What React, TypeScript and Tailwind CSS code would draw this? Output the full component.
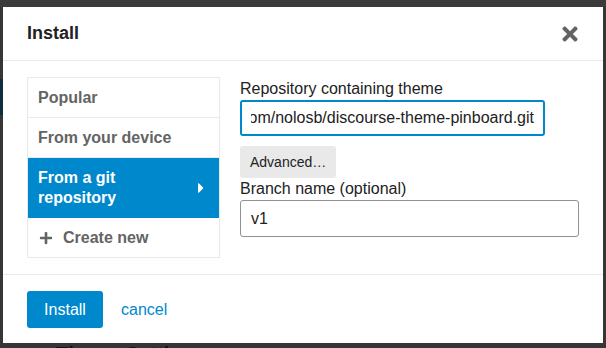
import { FaTimes, FaPlus, FaCaretRight } from "react-icons/fa";

const navItems = ["Popular", "From your device"];

export default function App() {
  return (
    <div className="relative h-[348px] w-[606px] overflow-hidden bg-[#363636] pt-[7px] pl-[3px] font-['Liberation_Sans',Arial,sans-serif]">
      {/* page behind the overlay */}
      <div className="absolute top-0 left-0 h-[7px] w-[606px] bg-[#3b3b3b]" />
      <div className="absolute top-[79px] left-0 h-[36px] w-[3px] bg-[#0d2f3b]" />
      <div className="absolute top-[339px] left-[56px] text-[20px] font-bold text-[#111]">Theme Settings</div>

      <div className="relative flex h-[336px] w-[600px] flex-col bg-white">
        <div className="flex h-[54px] items-center justify-between border-b border-[#e9e9e9] pr-[22px] pl-[24px]">
          <h2 className="text-[18px] font-bold text-[#222]">Install</h2>
          <FaTimes className="text-[22px] text-[#646464]" />
        </div>

        <div className="flex h-[214px] gap-[20px] border-b border-[#e9e9e9] pt-[16px] pl-[24px]">
          <ul className="flex h-[181px] w-[193px] flex-col border border-[#e9e9e9]">
            {navItems.map((item) => (
              <li
                key={item}
                className="flex h-[40px] items-center border-b border-[#e9e9e9] pl-[10px] text-[16px] leading-[20px] font-bold text-[#646464]"
              >
                {item}
              </li>
            ))}
            <li className="flex h-[60px] items-center justify-between bg-[#0088cc] pr-[10px] pl-[10px] text-[16px] leading-[20px] font-bold text-white">
              <span>
                From a git
                <br />
                repository
              </span>
              <FaCaretRight className="text-[16px]" />
            </li>
            <li className="flex h-[39px] items-center gap-[10px] pl-[11px] text-[16px] font-bold text-[#646464]">
              <FaPlus className="text-[14px]" />
              Create new
            </li>
          </ul>

          <div className="flex flex-col pt-[1px]">
            <label className="text-[16px] leading-[22px] text-[#222]">Repository containing theme</label>
            <div className="flex h-[36px] w-[305px] items-center rounded-[3px] border-2 border-[#0088cc] px-[9px]">
              <div className="flex w-full justify-end overflow-hidden text-[16px] whitespace-nowrap text-[#222]">
                https://github.com/nolosb/discourse-theme-pinboard.git
              </div>
            </div>
            <button className="mt-[10px] h-[32px] w-[96px] rounded-[3px] bg-[#e9e9e9] pl-[10px] text-left text-[14px] text-[#222]">
              Advanced…
            </button>
            <label className="text-[16px] leading-[22px] text-[#222]">Branch name (optional)</label>
            <div className="flex h-[37px] w-[339px] items-center rounded-[3px] border border-[#919191] px-[10px] text-[16px] text-[#222]">
              v1
            </div>
          </div>
        </div>

        <div className="flex items-center gap-[18px] pt-[16px] pl-[24px]">
          <button className="h-[37px] w-[76px] rounded-[3px] bg-[#0088cc] text-[16px] text-white">Install</button>
          <span className="text-[16px] text-[#0088cc]">cancel</span>
        </div>
      </div>
    </div>
  );
}
